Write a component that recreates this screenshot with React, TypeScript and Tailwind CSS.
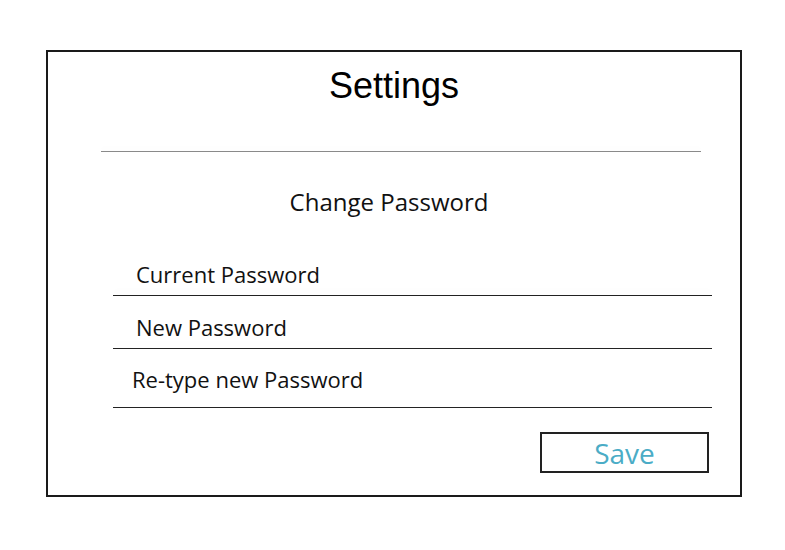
export default function App() {
  const fields = [
    { label: "Current Password", pl: "pl-[23px]", h: "h-[57px]", pb: "pb-[10px]" },
    { label: "New Password", pl: "pl-[23px]", h: "h-[53px]", pb: "pb-[10px]" },
    { label: "Re-type new Password", pl: "pl-[19px]", h: "h-[59px]", pb: "pb-[17px]" },
  ];
  return (
    <div className="w-[785px] h-[550px] bg-white pt-[50px] pl-[46px]">
      <div className="w-[696px] h-[447px] border-2 border-[#1a1a1a] flex flex-col">
        <h1 className="text-center text-[36px] leading-none mt-[16px] text-black font-['Liberation_Sans',Arial,sans-serif]">
          Settings
        </h1>
        <div className="mt-[47px] ml-[53px] w-[600px] h-px bg-[#8a8a8a] shadow-[0_-3px_4px_rgba(0,0,0,0.04)]" />
        <div className="mt-[38px] text-center text-[24px] leading-none text-[#111] font-['Open_Sans',sans-serif] pr-[10px]">
          Change Password
        </div>
        <div className="mt-[25px] ml-[65px] w-[599px] flex flex-col">
          {fields.map((f) => (
            <div key={f.label} className={`${f.h} flex flex-col justify-end`}>
              <div className={`${f.pl} ${f.pb} text-[22px] leading-none text-[#111] font-['Open_Sans',sans-serif]`}>
                {f.label}
              </div>
              <div className="h-px bg-[#222] shadow-[0_-4px_6px_rgba(0,0,0,0.05)]" />
            </div>
          ))}
        </div>
        <div className="flex justify-end mr-[31px] mt-[24px]">
          <button className="w-[169px] h-[41px] border-2 border-[#222] bg-white text-[#4bacc6] text-[28px] leading-none font-['Open_Sans',sans-serif] flex items-center justify-center">
            Save
          </button>
        </div>
      </div>
    </div>
  );
}
